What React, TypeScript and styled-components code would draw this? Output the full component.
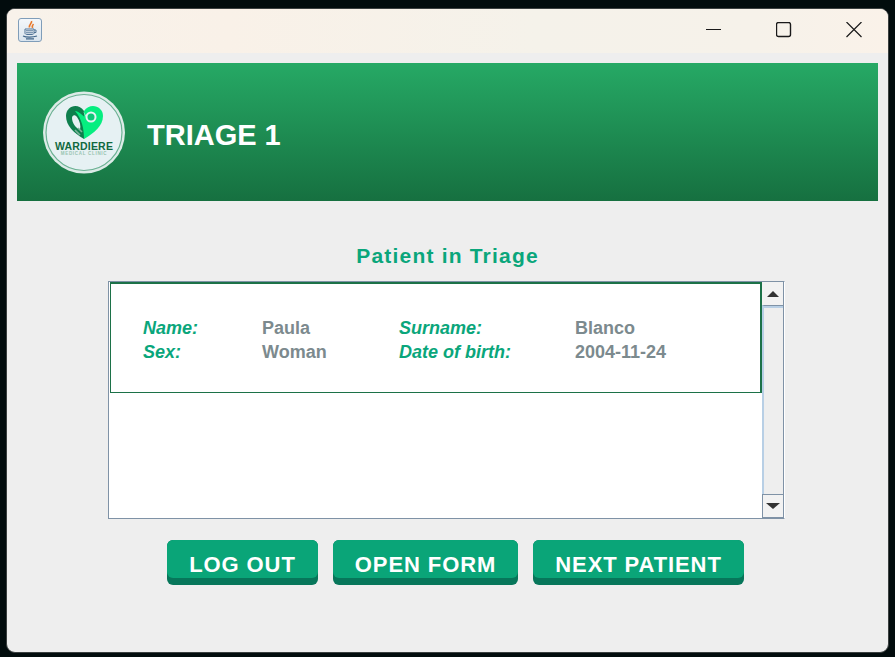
import styled, { createGlobalStyle } from "styled-components";

const GlobalStyle = createGlobalStyle`
  html, body {
    margin: 0;
    padding: 0;
    background: #020c0d;
  }
  * {
    box-sizing: border-box;
  }
`;

const patientRows = [
  [
    { label: "Name:", value: "Paula" },
    { label: "Surname:", value: "Blanco" },
  ],
  [
    { label: "Sex:", value: "Woman" },
    { label: "Date of birth:", value: "2004-11-24" },
  ],
];

const JavaIcon = () => (
  <svg width="18" height="20" viewBox="0 0 18 20" fill="none">
    <path d="M10.5 1C11.5 3 7.5 4.5 8.5 7.5M12.5 4C11 5.5 11 6.5 11.5 8" stroke="#e8792c" strokeWidth="1.6" />
    <path d="M4 9H13V13C13 14 12 14.500 11 14.500H6C5 14.500 4 14 4 13Z" fill="#f4f7fa" stroke="#4f7296" />
    <path d="M13 10H15V12.500H13" stroke="#4f7296" />
    <path d="M5 10.800H12M5 12.800H12" stroke="#4f7296" />
    <path d="M2 16C5 17.500 12 17.500 16 16M5 18.800H13" stroke="#3f6488" strokeWidth="1.2" />
  </svg>
);

const Logo = () => (
  <svg width="82" height="83" viewBox="0 0 82 83">
    <circle cx="41" cy="41.5" r="41" fill="#dcebe7" />
    <circle cx="41" cy="41.5" r="38" fill="#e6f1f3" stroke="#6bb193" strokeWidth="1.2" />
    <path d="M41 48C31 42 23 35 23 25C23 15 35 11 41 20Z" fill="#0e7f4d" />
    <path d="M41 48C51 42 60 35 60 25C60 15 47 11 41 20Z" fill="#06ee80" />
    <path d="M29 27C29 24 32 23 34 26C37 30 38 35 37 39C33 37 29 32 29 27Z" fill="#e6f1f3" />
    <path d="M32 20C36 20 41 26 44 28C48 30 48 36 46 39C44 43 43 46 41 48C41 38 39 28 32 20Z" fill="#06ee80" />
    <path d="M40 20C42 23 44 26 47 30L43 26Z" fill="#e6f1f3" />
    <circle cx="48" cy="26" r="5.500" fill="#e6f1f3" />
    <circle cx="48" cy="26" r="3.500" fill="#0ec778" />
    <path d="M32 39L37 44M35 37L39 41" stroke="#7fb59b" strokeWidth="1.6" />
    <text x="41" y="59" textAnchor="middle" fontFamily="Liberation Sans, sans-serif" fontSize="10.5" fontWeight="700" fill="#11693f" letterSpacing="0.2">
      WARDIERE
    </text>
    <text x="41" y="64" textAnchor="middle" fontFamily="Liberation Sans, sans-serif" fontSize="4.5" fontWeight="700" fill="#98c4b0" letterSpacing="0.7">
      MEDICAL CLINIC
    </text>
  </svg>
);

export default function App() {
  return (
    <>
      <GlobalStyle />
      <Desktop>
        <Window>
          <TitleBar>
            <AppIcon>
              <JavaIcon />
            </AppIcon>
            <WindowControls>
              <ControlButton>
                <svg width="16" height="16" viewBox="0 0 16 16">
                  <path d="M0 7.500H15" stroke="#1a1a1a" strokeWidth="1" />
                </svg>
              </ControlButton>
              <ControlButton>
                <svg width="16" height="16" viewBox="0 0 16 16" fill="none">
                  <rect x="0.500" y="0.500" width="14" height="14" rx="2" stroke="#1a1a1a" strokeWidth="1.400" />
                </svg>
              </ControlButton>
              <ControlButton>
                <svg width="16" height="16" viewBox="0 0 16 16">
                  <path d="M0.500 0L15.500 15M15.500 0L0.500 15" stroke="#1a1a1a" strokeWidth="1.200" />
                </svg>
              </ControlButton>
            </WindowControls>
          </TitleBar>
          <Content>
            <Banner>
              <Logo />
              <BannerTitle>TRIAGE 1</BannerTitle>
            </Banner>
            <SectionTitle>Patient in Triage</SectionTitle>
            <ListBox>
              <ListViewport>
                <PatientCard>
                  {patientRows.map((row) => (
                    <PatientRow key={row[0].label}>
                      <FieldLabel $width={119}>{row[0].label}</FieldLabel>
                      <FieldValue $width={137}>{row[0].value}</FieldValue>
                      <FieldLabel $width={176}>{row[1].label}</FieldLabel>
                      <FieldValue>{row[1].value}</FieldValue>
                    </PatientRow>
                  ))}
                </PatientCard>
              </ListViewport>
              <ScrollBar>
                <ScrollArrow>
                  <ArrowUp />
                </ScrollArrow>
                <ScrollThumb />
                <ScrollArrow $bottom>
                  <ArrowDown />
                </ScrollArrow>
              </ScrollBar>
            </ListBox>
            <ButtonRow>
              <ActionButton $width={151}>
                <ButtonFace>LOG OUT</ButtonFace>
              </ActionButton>
              <ActionButton $width={185}>
                <ButtonFace>OPEN FORM</ButtonFace>
              </ActionButton>
              <ActionButton $width={211}>
                <ButtonFace>NEXT PATIENT</ButtonFace>
              </ActionButton>
            </ButtonRow>
          </Content>
        </Window>
      </Desktop>
    </>
  );
}

const Desktop = styled.div`
  width: 895px;
  height: 657px;
  padding: 8px 6px 4px 6px;
  background: #020c0d;
  overflow: hidden;
`;

const Window = styled.div`
  height: 100%;
  display: flex;
  flex-direction: column;
  border: 1px solid #3b4040;
  border-radius: 9px;
  overflow: hidden;
  background: #eeeeee;
`;

const TitleBar = styled.div`
  height: 44px;
  flex: none;
  display: flex;
  align-items: center;
  justify-content: space-between;
  padding: 0 26px 3px 11px;
  background: linear-gradient(90deg, #f8f2ea 0%, #f9f1e8 25%, #f5f2ea 60%, #f6f2ea 85%, #faf2e9 100%);
`;

const AppIcon = styled.div`
  width: 24px;
  height: 24px;
  display: flex;
  align-items: center;
  justify-content: center;
  border: 1px solid #7f9db9;
  border-radius: 3px;
  background: linear-gradient(180deg, #f4f7fa, #d9e4ee);
`;

const WindowControls = styled.div`
  display: flex;
  gap: 54px;
`;

const ControlButton = styled.div`
  width: 16px;
  height: 16px;
  display: flex;
`;

const Content = styled.div`
  flex: 1;
  display: flex;
  flex-direction: column;
  padding: 10px 10px 0 10px;
`;

const Banner = styled.div`
  height: 138px;
  flex: none;
  display: flex;
  align-items: center;
  gap: 22px;
  padding-left: 26px;
  background: linear-gradient(180deg, #26a965 0%, #167040 100%);
`;

const BannerTitle = styled.h1`
  margin: 6px 0 0;
  font-family: "Liberation Sans", Arial, sans-serif;
  font-size: 29px;
  font-weight: 700;
  color: #ffffff;
`;

const SectionTitle = styled.h2`
  margin: 42px 0 12px;
  height: 26px;
  line-height: 26px;
  text-align: center;
  font-family: "Liberation Sans", Arial, sans-serif;
  font-size: 21px;
  font-weight: 700;
  letter-spacing: 1.2px;
  color: #0aa67b;
`;

const ListBox = styled.div`
  width: 677px;
  height: 238px;
  margin-left: 91px;
  flex: none;
  display: flex;
  border: 1px solid #7f92a6;
  border-right-color: #ffffff;
  background: #ffffff;
`;

const ListViewport = styled.div`
  flex: 1;
  padding-left: 1px;
  background: #ffffff;
`;

const PatientCard = styled.div`
  height: 111px;
  padding-top: 32px;
  padding-left: 32px;
  border: 1px solid #1c7148;
  border-top-width: 2px;
  border-right-width: 2px;
`;

const PatientRow = styled.div`
  display: flex;
  height: 24px;
  align-items: center;
`;

const FieldLabel = styled.span<{ $width: number }>`
  width: ${(p) => p.$width}px;
  flex: none;
  font-family: "Liberation Sans", Arial, sans-serif;
  font-size: 18px;
  font-weight: 700;
  font-style: italic;
  color: #0aa67b;
`;

const FieldValue = styled.span<{ $width?: number }>`
  width: ${(p) => (p.$width ? `${p.$width}px` : "auto")};
  flex: none;
  font-family: "Liberation Sans", Arial, sans-serif;
  font-size: 18px;
  font-weight: 700;
  color: #7c8a8e;
`;

const ScrollBar = styled.div`
  width: 22px;
  flex: none;
  display: flex;
  flex-direction: column;
  background: #eeeeee;
  border-right: 1px solid #7f92a6;
  border-bottom: 1px solid #7f92a6;
`;

const ScrollArrow = styled.div<{ $bottom?: boolean }>`
  height: 23px;
  flex: none;
  display: flex;
  align-items: center;
  justify-content: center;
  background: #f2f2f2;
  border-top: ${(p) => (p.$bottom ? "1px solid #7f92a6" : "none")};
  border-left: ${(p) => (p.$bottom ? "1px solid #7f92a6" : "none")};
`;

const ArrowUp = styled.div`
  width: 0;
  height: 0;
  border-left: 6px solid transparent;
  border-right: 6px solid transparent;
  border-bottom: 6px solid #333333;
`;

const ArrowDown = styled.div`
  width: 0;
  height: 0;
  border-left: 7px solid transparent;
  border-right: 7px solid transparent;
  border-top: 6px solid #333333;
`;

const ScrollThumb = styled.div`
  flex: 1;
  background: #eeeeee;
  border-top: 1px solid #7f92a6;
  border-left: 2px solid #b8cfe5;
  box-shadow: inset 0 2px 0 #b8cfe5;
`;

const ButtonRow = styled.div`
  display: flex;
  gap: 15px;
  margin: 21px 0 0 150px;
`;

const ActionButton = styled.button<{ $width: number }>`
  width: ${(p) => p.$width}px;
  height: 45px;
  padding: 0;
  border: none;
  border-radius: 6px;
  background: #07765a;
`;

const ButtonFace = styled.span`
  display: flex;
  height: 38px;
  align-items: center;
  justify-content: center;
  padding-top: 12px;
  margin-bottom: 7px;
  border-radius: 6px;
  background: #0aa578;
  font-family: "Liberation Sans", Arial, sans-serif;
  font-size: 22px;
  font-weight: 700;
  letter-spacing: 0.9px;
  color: #ffffff;
`;
